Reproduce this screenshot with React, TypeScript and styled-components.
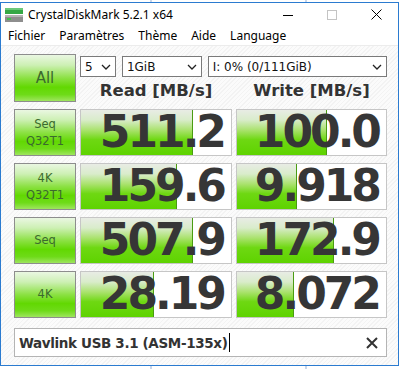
import React from 'react';
import styled, { createGlobalStyle } from 'styled-components';

const GlobalStyle = createGlobalStyle`
  html, body {
    margin: 0;
    padding: 0;
    background: #fff;
  }
  body {
    width: 402px;
    height: 369px;
    overflow: hidden;
  }
`;

const Page = styled.div`
  width: 402px;
  height: 369px;
  background: #fff;
  display: flex;
  flex-direction: column;
  overflow: hidden;
`;

const Strip = styled.div<{ $h: number }>`
  height: ${(p) => p.$h}px;
  background: repeating-linear-gradient(
    90deg,
    #fff 0px,
    #fff 150px,
    #c9d6ea 150px,
    #c9d6ea 152px,
    #fff 152px,
    #fff 155px
  );
`;

const Window = styled.div`
  width: 399px;
  height: 364px;
  box-sizing: border-box;
  border: 1px solid #2b7bd0;
  background: #fff;
  display: flex;
  flex-direction: column;
`;

const TitleBar = styled.div`
  height: 23px;
  display: flex;
  align-items: center;
  padding-left: 4px;
  font: 12px 'Noto Sans', 'Open Sans', sans-serif;
  color: #000;
`;

const Title = styled.span`
  margin-left: 5px;
  flex: 1;
`;

const WinButtons = styled.div`
  display: flex;
  align-items: center;
`;

const WinButton = styled.div`
  width: 44px;
  height: 23px;
  display: flex;
  align-items: center;
  justify-content: center;
`;

const MenuBar = styled.div`
  height: 19px;
  display: flex;
  align-items: center;
  gap: 14px;
  padding-left: 7px;
  border-bottom: 1px solid #ececec;
  font: 12px 'Noto Sans', 'Open Sans', sans-serif;
  color: #000;
`;

const Content = styled.div`
  flex: 1;
  padding: 8px 0 0 13px;
  background: repeating-linear-gradient(
    135deg,
    #fbfbfb 0px,
    #fbfbfb 2px,
    #f3f3f3 2px,
    #f3f3f3 3px
  );
  display: flex;
  flex-direction: column;
`;

const TopGrid = styled.div`
  display: grid;
  grid-template-columns: 62px 152px 151px;
  grid-template-rows: 24px 24px;
  column-gap: 4px;
`;

const LabelButton = styled.div<{ $big?: boolean }>`
  box-sizing: border-box;
  border: 1px solid #8d8d8d;
  background: linear-gradient(
    to bottom,
    #eaf7e2 0%,
    #cdf0b4 22%,
    #8ce144 50%,
    #62d802 70%,
    #6edb18 86%,
    #9ee55e 100%
  );
  display: flex;
  flex-direction: column;
  align-items: center;
  justify-content: center;
  font: ${(p) => (p.$big ? '15px' : '11.5px')} / ${(p) => (p.$big ? '18px' : '17px')}
    'DejaVu Sans', sans-serif;
  color: #3b6a2e;
`;

const AllButton = styled(LabelButton)`
  grid-row: 1 / span 2;
`;

const Selects = styled.div`
  grid-column: 2 / span 2;
  display: flex;
  gap: 6px;
  margin-top: 2px;
  height: 21px;
`;

const Select = styled.div<{ $w: number }>`
  width: ${(p) => p.$w}px;
  box-sizing: border-box;
  border: 1px solid #7a7a7a;
  background: #fff;
  display: flex;
  align-items: center;
  justify-content: space-between;
  padding: 0 4px 0 4px;
  font: 12px 'DejaVu Sans', sans-serif;
  color: #111;
`;

const Header = styled.div`
  display: flex;
  align-items: flex-end;
  justify-content: center;
  font: bold 16.5px/22px 'DejaVu Sans', sans-serif;
  color: #333;
`;

const Results = styled.div`
  margin-top: 7px;
  display: grid;
  grid-template-columns: 62px 152px 151px;
  grid-auto-rows: 47px;
  column-gap: 4px;
  row-gap: 7px;
`;

const Cell = styled.div<{ $fill: number }>`
  box-sizing: border-box;
  border: 1px solid #c6c6c6;
  background-color: #fff;
  background-image: linear-gradient(#4a9c12, #4a9c12),
    linear-gradient(
      to bottom,
      #e8ece5 0%,
      #d9eccb 22%,
      #a9e26c 45%,
      #6ed812 66%,
      #5ed300 100%
    );
  background-repeat: no-repeat;
  background-position: ${(p) => p.$fill - 1}px 0, 0 0;
  background-size: 1px 100%, ${(p) => p.$fill}px 100%;
  display: flex;
  align-items: center;
  justify-content: flex-end;
  padding: 0 7px 2px 0;
  font: bold 44px/1 'DejaVu Sans', sans-serif;
  letter-spacing: -3px;
  color: #363636;
  white-space: nowrap;
`;

const NameField = styled.div`
  margin-top: 10px;
  width: 373px;
  height: 29px;
  box-sizing: border-box;
  border: 1px solid #b4b4b4;
  background: #fff;
  display: flex;
  align-items: center;
  padding: 0 8px 0 4px;
  font: bold 13.5px 'DejaVu Sans', sans-serif;
  letter-spacing: -0.35px;
  color: #333;
`;

const NameText = styled.span`
  flex: 1;
  display: flex;
  align-items: center;
`;

const Caret = styled.span`
  width: 1px;
  height: 19px;
  background: #000;
  margin-left: 1px;
`;

const Chevron = () => (
  <svg width="10" height="6" viewBox="0 0 10 6">
    <path d="M1 1 L5 5 L9 1" fill="none" stroke="#222" strokeWidth="1.3" />
  </svg>
);

const AppIcon = () => (
  <svg width="18" height="16" viewBox="0 0 18 16">
    <rect x="0" y="1" width="18" height="6" fill="#35a845" />
    <rect x="0" y="1" width="18" height="2" fill="#6cc97a" />
    <rect x="0" y="8" width="18" height="7" fill="#8e8e8e" />
    <rect x="0" y="8" width="18" height="2" fill="#b4b4b4" />
    <rect x="2" y="11" width="4" height="2" fill="#3fc24c" />
  </svg>
);

const rows = [
  { label: ['Seq', 'Q32T1'], read: '511.2', write: '100.0', rf: 112, wf: 90 },
  { label: ['4K', 'Q32T1'], read: '159.6', write: '9.918', rf: 96, wf: 60 },
  { label: ['Seq'], read: '507.9', write: '172.9', rf: 112, wf: 97 },
  { label: ['4K'], read: '28.19', write: '8.072', rf: 73, wf: 57 },
];

function App() {
  return (
    <Page>
      <GlobalStyle />
      <Strip $h={2} />
      <Window>
        <TitleBar>
          <AppIcon />
          <Title>CrystalDiskMark 5.2.1 x64</Title>
          <WinButtons>
            <WinButton>
              <svg width="10" height="10" viewBox="0 0 10 10">
                <path d="M0 5.5 H10" stroke="#000" strokeWidth="1" />
              </svg>
            </WinButton>
            <WinButton>
              <svg width="10" height="10" viewBox="0 0 10 10">
                <rect x="0.5" y="0.5" width="9" height="9" fill="none" stroke="#c4c4c4" />
              </svg>
            </WinButton>
            <WinButton>
              <svg width="11" height="11" viewBox="0 0 11 11">
                <path d="M0.5 0.5 L10.5 10.5 M10.5 0.5 L0.5 10.5" stroke="#000" strokeWidth="1" />
              </svg>
            </WinButton>
          </WinButtons>
        </TitleBar>
        <MenuBar>
          <span>Fichier</span>
          <span>Paramètres</span>
          <span>Thème</span>
          <span>Aide</span>
          <span>Language</span>
        </MenuBar>
        <Content>
          <TopGrid>
            <AllButton $big>All</AllButton>
            <Selects>
              <Select $w={36}>
                <span>5</span>
                <Chevron />
              </Select>
              <Select $w={80}>
                <span>1GiB</span>
                <Chevron />
              </Select>
              <Select $w={180}>
                <span>I: 0% (0/111GiB)</span>
                <Chevron />
              </Select>
            </Selects>
            <Header>Read [MB/s]</Header>
            <Header>Write [MB/s]</Header>
          </TopGrid>
          <Results>
            {rows.map((r) => (
              <React.Fragment key={r.label.join('-')}>
                <LabelButton>
                  {r.label.map((l) => (
                    <span key={l}>{l}</span>
                  ))}
                </LabelButton>
                <Cell $fill={r.rf}>{r.read}</Cell>
                <Cell $fill={r.wf}>{r.write}</Cell>
              </React.Fragment>
            ))}
          </Results>
          <NameField>
            <NameText>
              Wavlink USB 3.1 (ASM-135x)
              <Caret />
            </NameText>
            <svg width="12" height="12" viewBox="0 0 12 12">
              <path d="M1 1 L11 11 M11 1 L1 11" stroke="#333" strokeWidth="2" />
            </svg>
          </NameField>
        </Content>
      </Window>
      <Strip $h={3} />
    </Page>
  );
}

export default App;
